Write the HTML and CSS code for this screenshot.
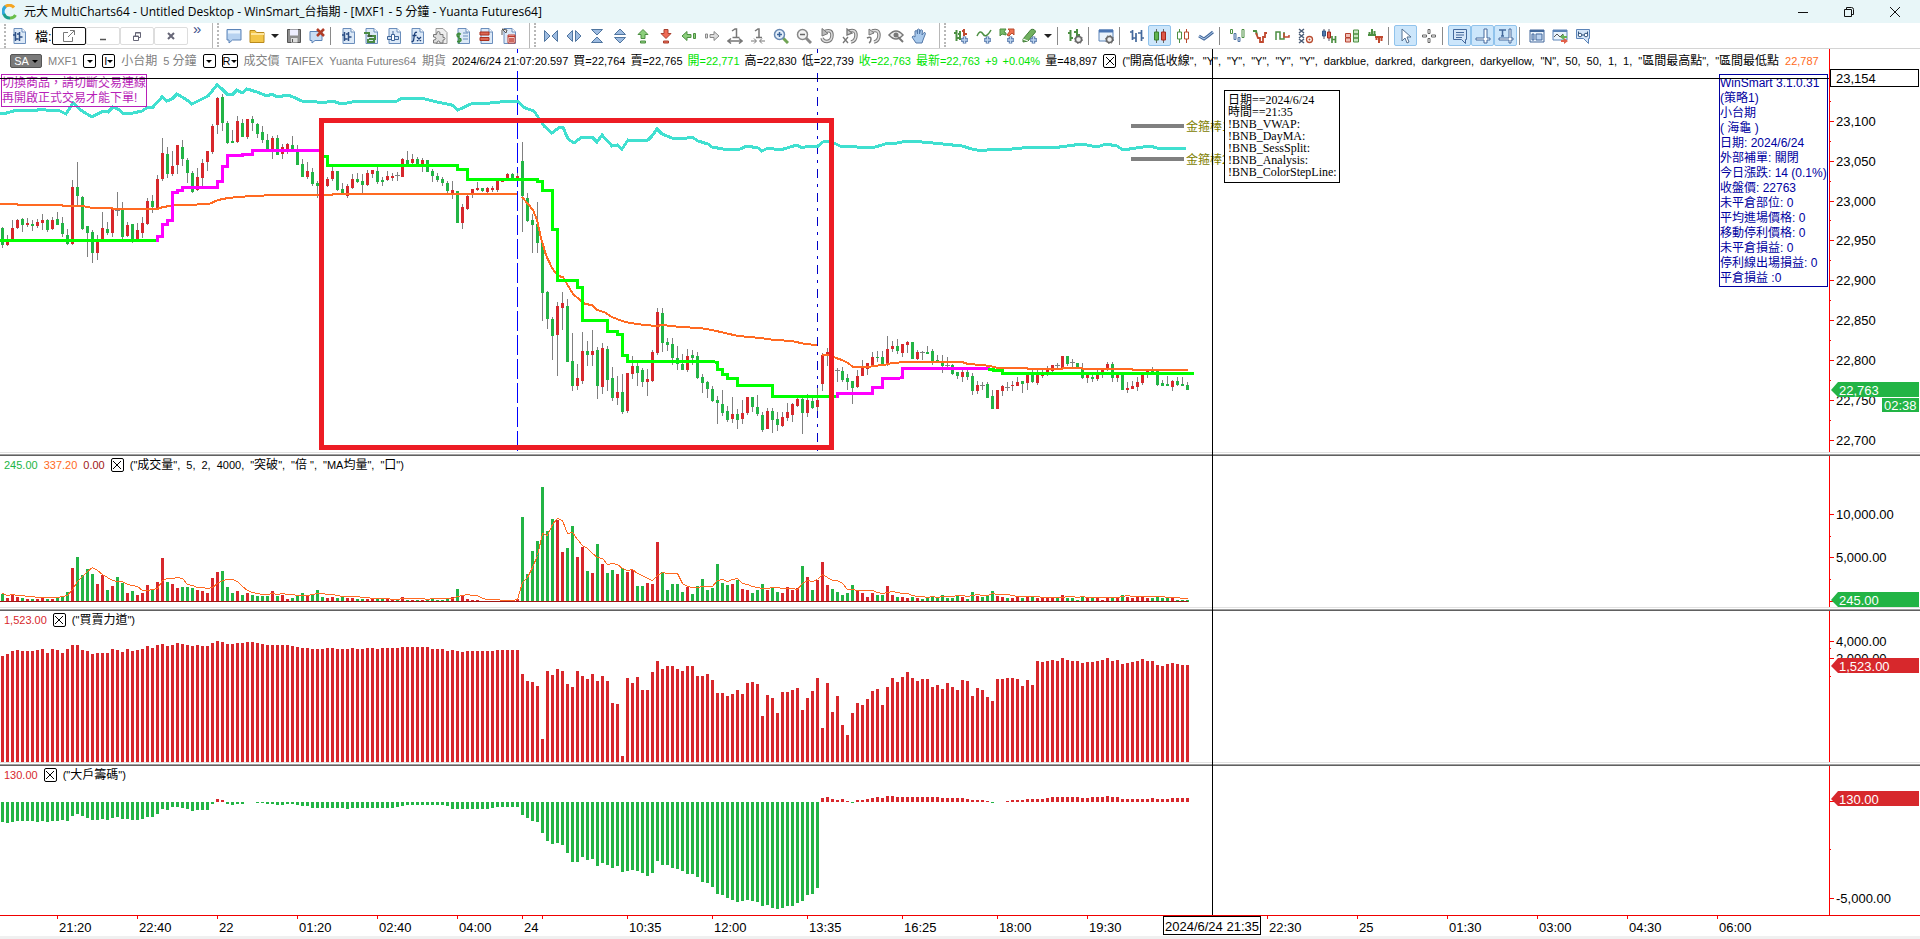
FILE: index.html
```
<!DOCTYPE html>
<html lang="zh-Hant">
<head>
<meta charset="utf-8">
<title>元大 MultiCharts64</title>
<link rel="stylesheet" href="styles.css">
</head>
<body>
<svg class="defs" aria-hidden="true">
  <defs>
    <g id="page"><path d="M3 .5h8l3.500 3.500v11.500h-11.500z" fill="#dce9f7" stroke="#6b8ebc"/><path d="M11 .5v3.500h3.500" fill="#fff" stroke="#6b8ebc"/></g>
    <g id="plus"><path d="M11.500 8.500v7M8 12h7" stroke="#4a6fa5" stroke-width="3.500"/><path d="M11.500 9v6M8.500 12h6" stroke="#bcd3ef" stroke-width="1.500"/></g>
    <g id="cog"><circle cx="11.500" cy="11.500" r="3" fill="#eee" stroke="#666" stroke-width="1.500"/><circle cx="11.500" cy="11.500" r="4" fill="none" stroke="#666" stroke-dasharray="1.500 1.600"/></g>
    <symbol id="i-instr" viewBox="0 0 16 16"><use href="#page"/><path d="M4.500 4v9M2 7h2.500M4.500 11h3M8.500 4v9M6 6h2.500M8.500 9h3" stroke="#2d4f85" stroke-width="1.500"/></symbol>
    <symbol id="i-chart" viewBox="0 0 16 16"><use href="#page"/><path d="M1 5h5v3h6v3h-6M5 11v3h6v-3" fill="none" stroke="#4b8b45" stroke-width="2"/><path d="M4 8h5" stroke="#333"/></symbol>
    <symbol id="i-lock" viewBox="0 0 16 16"><use href="#page"/><path d="M1.500 8.500h11v3h-11z" fill="#cfe0f2" stroke="#3f6599"/><path d="M5.500 6.500h3v6h-3zM7 3v3" fill="#fff" stroke="#3f6599"/></symbol>
    <symbol id="i-fx" viewBox="0 0 16 16"><use href="#page"/><path d="M8 4.500q-2-1-2.500 2l-1 6q-.5 1.500-2 1M3.500 7.500h4M8 9l4 4M12 9l-4 4" fill="none" stroke="#1d3f78" stroke-width="1.300"/></symbol>
    <symbol id="i-puzzle" viewBox="0 0 16 16"><path d="M4 .5h7l4 4v11H4z" fill="#eee" stroke="#999"/><path d="M1.500 6.500h3q0-3 2-3t1.500 3h3v3q2-.5 2 1t-2 1.500v3h-3q0-2-1.500-2t-1.500 2h-3.500v-3q2.500 0 2.500-1.500t-2.500-1.500z" fill="#ddd" stroke="#777"/></symbol>
    <symbol id="i-dollar" viewBox="0 0 16 16"><use href="#page"/><path d="M8 5h5M8 8h5M8 11h5" stroke="#6b8ebc"/><path d="M6 6q-4-1-4 1t2 2.500 2 2.500-4 1.500M4 4.500v11" fill="none" stroke="#3a8a36" stroke-width="1.500"/></symbol>
    <symbol id="i-redbars" viewBox="0 0 16 16"><use href="#page"/><path d="M2 4h9v3H2zM2 9.500h9v3H2z" fill="#dd6753" stroke="#a8301f"/></symbol>
    <symbol id="i-scan" viewBox="0 0 16 16"><use href="#page"/><path d="M7 7h7v8H7z" fill="#fff" stroke="#c0392b"/><path d="M7 8.500h7M8 11h5M8 13h5" stroke="#c0392b" stroke-width="1.500"/><path d="M1 1l5 1-1 3zM1 2v5" fill="#eee" stroke="#555"/></symbol>
    <symbol id="i-chat" viewBox="0 0 16 16"><path d="M1 1.500h14v10.500H6.500L3 15v-3H1z" fill="#b7d2f0" stroke="#5c84b8"/><path d="M2 2.500h12v3H2z" fill="#e7f2fd"/></symbol>
    <symbol id="i-folder" viewBox="0 0 16 16"><path d="M1 2.500h5l1.500 2h7.500v10H1z" fill="#f3c648" stroke="#b98a1d"/><path d="M2 6h13" stroke="#ffe69b" stroke-width="2"/></symbol>
    <symbol id="i-save" viewBox="0 0 16 16"><path d="M1.500 1.500h13v13h-13z" fill="#8e8e8e" stroke="#555"/><path d="M4 1.500h8v6H4z" fill="#eef"/><path d="M5 10h6.500v4.500H5z" fill="#ddd"/><path d="M6.500 11v3" stroke="#555"/></symbol>
    <symbol id="i-chatx" viewBox="0 0 16 16"><path d="M1 3.500h12v9H6L3 15v-2.500H1z" fill="#c9ddf4" stroke="#5c84b8"/><path d="M8 1l7 7M15 1L8 8" stroke="#b03d28" stroke-width="2.500"/></symbol>
    <symbol id="i-hin" viewBox="0 0 16 16"><path d="M1.500 2.500l5.500 5.500-5.500 5.500zM14.500 2.500L9 8l5.500 5.500z" fill="#9dbbe0" stroke="#50759f"/></symbol>
    <symbol id="i-hout" viewBox="0 0 16 16"><path d="M6.500 2.500L1 8l5.500 5.500zM9.500 2.500L15 8l-5.500 5.500z" fill="#9dbbe0" stroke="#50759f"/></symbol>
    <symbol id="i-vin" viewBox="0 0 16 16"><path d="M2.500 1.500h11L8 7zM2.500 14.500h11L8 9z" fill="#9dbbe0" stroke="#50759f"/></symbol>
    <symbol id="i-vout" viewBox="0 0 16 16"><path d="M2.500 6.500h11L8 1zM2.500 9.500h11L8 15z" fill="#9dbbe0" stroke="#50759f"/></symbol>
    <symbol id="i-up" viewBox="0 0 16 16"><path d="M8 1.500l5 5h-3v4h-4v-4h-3zM5.500 13h5v2h-5z" fill="#8ccf7c" stroke="#4c8f42"/></symbol>
    <symbol id="i-down" viewBox="0 0 16 16"><path d="M8 10.500l5-5h-3v-4h-4v4h-3zM5.500 13h5v2h-5z" fill="#ef6a55" stroke="#a8402f"/></symbol>
    <symbol id="i-left" viewBox="0 0 16 16"><path d="M1 8l5-4.500v3h4v3h-4v3zM12.500 5.500h2v5h-2z" fill="#8ccf7c" stroke="#4c8f42"/></symbol>
    <symbol id="i-right" viewBox="0 0 16 16"><path d="M15 8l-5-4.500v3H6v3h4v3zM1.500 6h2v4h-2z" fill="#ddd" stroke="#888"/></symbol>
    <symbol id="i-one" viewBox="0 0 16 16"><path d="M5 3l3-2h1.500v8M5.500 9.500h7" fill="none" stroke="#777" stroke-width="1.500"/><path d="M1 13h14M4 10.500L1 13l3 2.500M12 10.500l3 2.500-3 2.500" fill="none" stroke="#777" stroke-width="1.500"/></symbol>
    <symbol id="i-oneb" viewBox="0 0 16 16"><path d="M5 3l3-2h1v8M6 9.500h6" fill="none" stroke="#777" stroke-width="1.500"/><path d="M1 13h5M15 13h-5M4 10.500L6.500 13 4 15.500M12 10.500L9.500 13l2.500 2.500" fill="none" stroke="#777"/></symbol>
    <symbol id="i-zin" viewBox="0 0 16 16"><path d="M10 10l5 5" stroke="#71a455" stroke-width="3"/><circle cx="6.500" cy="6.500" r="5" fill="#e4effa" stroke="#6889b3" stroke-width="1.500"/><path d="M4 6.500h5M6.500 4v5" stroke="#3d659c" stroke-width="1.500"/></symbol>
    <symbol id="i-zout" viewBox="0 0 16 16"><path d="M10 10l5 5" stroke="#888" stroke-width="3"/><circle cx="6.500" cy="6.500" r="5" fill="#f3f3f3" stroke="#888" stroke-width="1.500"/><path d="M4 6.500h5" stroke="#666" stroke-width="1.500"/></symbol>
    <symbol id="i-undo" viewBox="0 0 16 16"><path d="M6 3.500q7-2.500 7 3.500t-5 6.500q-4 0-5-3.500" fill="none" stroke="#777" stroke-width="3.500"/><path d="M6 3.500q7-2.500 7 3.500t-5 6.500q-4 0-5-3.500" fill="none" stroke="#ddd" stroke-width="1.500"/><path d="M3 .5v7.500l6-2.500z" fill="#bbb" stroke="#777"/></symbol>
    <symbol id="i-undox" viewBox="0 0 16 16"><path d="M7 3q7-2 7 4t-5 7" fill="none" stroke="#777" stroke-width="3.500"/><path d="M7 3q7-2 7 4t-5 7" fill="none" stroke="#ddd" stroke-width="1.500"/><path d="M5 1v6l5-2zM1 9l5 6M6 9l-5 6" fill="#ccc" stroke="#777" stroke-width="1.300"/></symbol>
    <symbol id="i-undoq" viewBox="0 0 16 16"><path d="M7 3q7-2 7 4t-5 7" fill="none" stroke="#777" stroke-width="3.500"/><path d="M7 3q7-2 7 4t-5 7" fill="none" stroke="#ddd" stroke-width="1.500"/><path d="M4 1v6l5-2z" fill="#ccc" stroke="#777"/><path d="M2 10q4-2 4 1t-2 4" fill="none" stroke="#777" stroke-width="1.500"/></symbol>
    <symbol id="i-eye" viewBox="0 0 16 16"><path d="M1 7q7-8 14 0-7 8-14 0z" fill="#eee" stroke="#777" stroke-width="1.500"/><circle cx="8" cy="7" r="2.500" fill="#777"/><path d="M10 9l5 5" stroke="#777" stroke-width="2"/></symbol>
    <symbol id="i-hand" viewBox="0 0 16 16"><path d="M5 15l-4-6q1-2 3 0V3q1.500-1 2 0l.5 3V1.500q1.500-1 2 0V6l1-4q1.500-.5 2 .5L11 7l2-2.500q1.500 0 1.500 1L12 12l-1 3z" fill="#a8c9ec" stroke="#5478a8"/></symbol>
    <symbol id="i-addinstr" viewBox="0 0 16 16"><path d="M3.500 2v11M1 5h2.500M3.500 10H7M7 3v9M5 6h2" stroke="#4c8f42" stroke-width="2"/><path d="M11 1v7M9 3h2M11 6h3" stroke="#c0492f" stroke-width="2"/><use href="#plus"/></symbol>
    <symbol id="i-addcurve" viewBox="0 0 16 16"><path d="M1 8q3-7 6-2t8-4" fill="none" stroke="#4c8f42" stroke-width="1.500"/><use href="#plus"/></symbol>
    <symbol id="i-addsignal" viewBox="0 0 16 16"><path d="M1 1v7l2-2 4 1V5L5 4l2-3z" fill="#78b969" stroke="#4c8f42"/><path d="M15 1H9l2 2-3 4 2 1 3-3 2 2z" fill="#ee7351" stroke="#b84a2e"/><use href="#plus"/></symbol>
    <symbol id="i-adddraw" viewBox="0 0 16 16"><path d="M1 11L9 1.500q4-1 4.500 2.500L6 13l-5 1z" fill="#71b060" stroke="#447f3b"/><path d="M1 11l5 2" stroke="#fff"/><use href="#plus"/></symbol>
    <symbol id="i-fmt" viewBox="0 0 16 16"><path d="M3.500 2v11M1 5h2.500M3.500 10H6M10 1v9M7 4h3M10 7h3" stroke="#4c8f42" stroke-width="2"/><use href="#cog"/></symbol>
    <symbol id="i-win" viewBox="0 0 16 16"><path d="M1 2h14v11H1z" fill="#eaf3fc" stroke="#5c84b8"/><path d="M1 3h14" stroke="#4b76b4" stroke-width="3"/><use href="#cog"/></symbol>
    <symbol id="i-ohlc" viewBox="0 0 16 16"><path d="M3.500 2v10M1 4h2.500M3.500 10H7v4M7 5v9M12.500 2v11M9 5h3.500M12.500 10H15" fill="none" stroke="#44699c" stroke-width="1.700"/></symbol>
    <symbol id="i-candle" viewBox="0 0 16 16"><path d="M4.500 1v14M11.500 1v14" stroke="#666"/><path d="M2.500 4h4v8h-4z" fill="#61b451" stroke="#397e2e"/><path d="M9.500 4h4v8h-4z" fill="#dc5748" stroke="#a5281c"/></symbol>
    <symbol id="i-hollow" viewBox="0 0 16 16"><path d="M4.500 1v14" stroke="#4c8f42"/><path d="M11.500 1v14" stroke="#b84a2e"/><path d="M2.500 4h4v7h-4z" fill="#fff" stroke="#4c8f42"/><path d="M9.500 4h4v7h-4z" fill="#fff" stroke="#b84a2e"/></symbol>
    <symbol id="i-line" viewBox="0 0 16 16"><path d="M1 8l5 3 4-3 5-4" fill="none" stroke="#44699c" stroke-width="3"/><path d="M1 8l5 3 4-3 5-4" fill="none" stroke="#b4cdea"/></symbol>
    <symbol id="i-blocks" viewBox="0 0 16 16"><path d="M1.500 1.500h2v4h-2zM13 1.500h2v8h-2z" fill="#fff" stroke="#4c8f42"/><path d="M5 5.500h2v6H5zM9 9.500h2v4H9z" fill="#c8daf0" stroke="#5577a6"/></symbol>
    <symbol id="i-kagi" viewBox="0 0 16 16"><path d="M1 3h3l1 4" fill="none" stroke="#4c8f42" stroke-width="2"/><path d="M4 5l2 5h2v4h3V9h2V5h2" fill="none" stroke="#c0492f" stroke-width="1.800"/></symbol>
    <symbol id="i-step" viewBox="0 0 16 16"><path d="M1 12V4h4v7h4V4" fill="none" stroke="#4c8f42" stroke-width="1.500"/><path d="M9 5v4h5v-2" fill="none" stroke="#c0492f" stroke-width="1.500"/></symbol>
    <symbol id="i-pf" viewBox="0 0 16 16"><path d="M1 1l5 4M6 1L1 5M1 6l5 4M6 6l-5 4M1 11l5 4M6 11l-5 4" stroke="#4b5d77" stroke-width="1.500"/><circle cx="11.500" cy="11.500" r="3" fill="#fff" stroke="#b84a2e" stroke-width="1.300"/><circle cx="11.500" cy="11.500" r="1" fill="#b84a2e"/></symbol>
    <symbol id="i-hash" viewBox="0 0 16 16"><path d="M3 1v10M8 1v12" stroke="#556"/><path d="M1.500 3h3v5h-3z" fill="#5279ad" stroke="#355a8a"/><path d="M6.500 4h3v6h-3z" fill="#e46955" stroke="#a5281c"/><path d="M11 8v7M14.500 8v7M11 11.500h3.500" stroke="#4c8f42" stroke-width="1.700"/></symbol>
    <symbol id="i-grid" viewBox="0 0 16 16"><path d="M1.500 5.500h5v4h-5zM1.500 10h5v4h-5z" fill="#f0bdb4" stroke="#b5412e"/><path d="M9.500 2h5v4h-5zM9.500 6h5v4h-5zM9.500 10h5v4h-5z" fill="#c9e5c2" stroke="#4c8f42"/></symbol>
    <symbol id="i-profile" viewBox="0 0 16 16"><path d="M1 7h8M2.500 7V4M5 7V1M7.500 7V3" stroke="#4c8f42" stroke-width="2"/><path d="M8 9h8M9.500 9v3M12 9v6M14.500 9v4" stroke="#c0492f" stroke-width="2"/></symbol>
    <symbol id="i-cursor" viewBox="0 0 16 16"><path d="M4 1v12l3-3 2 5 2-1-2-5h4z" fill="#fff" stroke="#55708f"/></symbol>
    <symbol id="i-cross" viewBox="0 0 16 16"><path d="M7 1.500h2v4H7zM7 10.500h2v4H7zM1.500 7h4v2h-4zM10.500 7h4v2h-4z" fill="#fff" stroke="#666"/></symbol>
    <symbol id="i-note" viewBox="0 0 16 16"><path d="M1.500 1.500h13v10h-1v4l-4-4h-8z" fill="#d5e6f8" stroke="#44699c"/><path d="M4 4.500h8M4 7h8M4 9.500h6" stroke="#44699c"/></symbol>
    <symbol id="i-axis" viewBox="0 0 16 16"><path d="M9 1h3v9h3v2h-3v3H9v-3H1v-2h8z" fill="#fff" stroke="#44699c"/></symbol>
    <symbol id="i-axist" viewBox="0 0 16 16"><path d="M11 1h2v9h2v2h-2v3h-2v-3H1v-2h10z" fill="#fff" stroke="#44699c"/><path d="M1 2h7M4.500 2v6M3 8h3" stroke="#44699c" stroke-width="1.500"/></symbol>
    <symbol id="i-panel" viewBox="0 0 16 16"><path d="M1 2h14v12H1z" fill="#eaf3fc" stroke="#44699c"/><path d="M1 3h14" stroke="#44699c" stroke-width="2"/><path d="M3 6h2v6H3zM7 6h6v6H7z" fill="#bcd3ef" stroke="#44699c"/></symbol>
    <symbol id="i-export" viewBox="0 0 16 16"><path d="M1 2h14v10H1z" fill="#eaf3fc" stroke="#5c84b8"/><path d="M1 3h14" stroke="#5c84b8" stroke-width="2"/><path d="M2 9l3-3 3 3 3-3" fill="none" stroke="#555"/><path d="M15 8h-3V6L8 9l4 3v-2h3z" fill="#67b356"/><path d="M9 12h3v-2l4 3-4 3v-2H9z" fill="#e0604a"/></symbol>
    <symbol id="i-find" viewBox="0 0 16 16"><path d="M1.500 1.500h13v9h-1v5l-5-5h-7z" fill="#d5e6f8" stroke="#5c84b8"/><circle cx="5" cy="7" r="1.800" fill="#fff" stroke="#34567f"/><circle cx="11" cy="7" r="1.800" fill="#fff" stroke="#34567f"/><path d="M3.500 6V3.500M12.500 6V3.500M7 7h2" stroke="#34567f"/></symbol>
  </defs>
</svg>

<div class="app">
  <header class="titlebar">
    <svg class="logo" viewBox="0 0 16 16" aria-hidden="true"><path d="M12 3.500a6 6 0 0 0-9-.5" fill="none" stroke="#f5a623" stroke-width="3"/><path d="M3.500 2.500a6.500 6.500 0 0 0-1.500 8" fill="none" stroke="#2fa8dc" stroke-width="3"/><path d="M2 10a6 6 0 0 0 6 4" fill="none" stroke="#1b9e8a" stroke-width="3"/><path d="M8 14a6 6 0 0 0 5.500-3" fill="none" stroke="#6abf4b" stroke-width="3"/></svg>
    <h1 class="title">元大 MultiCharts64 - Untitled Desktop - WinSmart_台指期 - [MXF1 - 5 分鐘 - Yuanta Futures64]</h1>
    <div class="winbtns">
      <button aria-label="最小化"><svg viewBox="0 0 10 10"><path d="M0 5.500h10" stroke="#111"/></svg></button>
      <button aria-label="還原"><svg viewBox="0 0 10 10"><path d="M.5 2.500h7v7h-7zM2.500 2V.5h5q2 0 2 2v5H8" fill="none" stroke="#111"/></svg></button>
      <button aria-label="關閉"><svg viewBox="0 0 10 10"><path d="M0 0l10 10M10 0L0 10" stroke="#111"/></svg></button>
    </div>
  </header>

  <nav class="toolbar">
    <span class="grip"></span>
    <button class="tb" aria-label="商品"><svg><use href="#i-instr"/></svg></button>
    <button class="menu">檔:</button>
    <div class="mdi">
      <button class="on" aria-label="彈出"><svg viewBox="0 0 12 12"><path d="M5 2.500H.5v9h9V7M7 .5h4.500V5M11 1L5 7" fill="none" stroke="#777"/></svg></button>
      <button aria-label="縮小"><svg viewBox="0 0 12 12"><path d="M3 9.500h6" stroke="#555" stroke-width="1.500"/></svg></button>
      <button aria-label="還原視窗"><svg viewBox="0 0 12 12"><path d="M2.500 6h5v4.500h-5zM2.500 6.500h5M4.500 6V2.500h5v5H8M4.500 3h5" fill="none" stroke="#667"/></svg></button>
      <button aria-label="關閉視窗"><svg viewBox="0 0 12 12"><path d="M3 3l6 6M9 3L3 9" stroke="#667" stroke-width="2"/></svg></button>
    </div>
    <button class="more" aria-label="更多">»</button>
    <span class="split"></span>
    <button class="tb" aria-label="新增"><svg><use href="#i-chat"/></svg></button>
    <button class="tb" aria-label="開啟"><svg><use href="#i-folder"/></svg></button>
    <button class="drop" aria-label="開啟選單"></button>
    <button class="tb" aria-label="儲存"><svg><use href="#i-save"/></svg></button>
    <button class="tb" aria-label="刪除"><svg><use href="#i-chatx"/></svg></button>
    <span class="sep"></span>
    <button class="tb" aria-label="插入商品"><svg><use href="#i-instr"/></svg></button>
    <button class="tb" aria-label="插入圖表"><svg><use href="#i-chart"/></svg></button>
    <button class="tb" aria-label="鎖定"><svg><use href="#i-lock"/></svg></button>
    <button class="tb" aria-label="函數"><svg><use href="#i-fx"/></svg></button>
    <button class="tb" aria-label="外掛"><svg><use href="#i-puzzle"/></svg></button>
    <button class="tb" aria-label="策略"><svg><use href="#i-dollar"/></svg></button>
    <button class="tb" aria-label="深度"><svg><use href="#i-redbars"/></svg></button>
    <button class="tb" aria-label="掃描"><svg><use href="#i-scan"/></svg></button>
    <span class="split"></span>
    <button class="tb" aria-label="縮小間距"><svg><use href="#i-hin"/></svg></button>
    <button class="tb" aria-label="放大間距"><svg><use href="#i-hout"/></svg></button>
    <button class="tb" aria-label="垂直縮小"><svg><use href="#i-vin"/></svg></button>
    <button class="tb" aria-label="垂直放大"><svg><use href="#i-vout"/></svg></button>
    <button class="tb" aria-label="上"><svg><use href="#i-up"/></svg></button>
    <button class="tb" aria-label="下"><svg><use href="#i-down"/></svg></button>
    <button class="tb" aria-label="左"><svg><use href="#i-left"/></svg></button>
    <button class="tb" aria-label="右"><svg><use href="#i-right"/></svg></button>
    <button class="tb" aria-label="一比一"><svg><use href="#i-one"/></svg></button>
    <button class="tb" aria-label="重設"><svg><use href="#i-oneb"/></svg></button>
    <button class="tb" aria-label="放大"><svg><use href="#i-zin"/></svg></button>
    <button class="tb" aria-label="縮小圖"><svg><use href="#i-zout"/></svg></button>
    <button class="tb" aria-label="復原"><svg><use href="#i-undo"/></svg></button>
    <button class="tb" aria-label="全部復原"><svg><use href="#i-undox"/></svg></button>
    <button class="tb" aria-label="復原縮放"><svg><use href="#i-undoq"/></svg></button>
    <button class="tb" aria-label="檢視"><svg><use href="#i-eye"/></svg></button>
    <button class="tb" aria-label="拖曳"><svg><use href="#i-hand"/></svg></button>
    <span class="split"></span>
    <button class="tb" aria-label="加入商品"><svg><use href="#i-addinstr"/></svg></button>
    <button class="tb" aria-label="加入指標"><svg><use href="#i-addcurve"/></svg></button>
    <button class="tb" aria-label="加入訊號"><svg><use href="#i-addsignal"/></svg></button>
    <button class="tb" aria-label="繪圖"><svg><use href="#i-adddraw"/></svg></button>
    <button class="drop" aria-label="繪圖選單"></button>
    <span class="sep"></span>
    <button class="tb" aria-label="格式"><svg><use href="#i-fmt"/></svg></button>
    <span class="sep"></span>
    <button class="tb" aria-label="視窗設定"><svg><use href="#i-win"/></svg></button>
    <span class="sep"></span>
    <button class="tb" aria-label="OHLC"><svg><use href="#i-ohlc"/></svg></button>
    <button class="tb on" aria-label="K線"><svg><use href="#i-candle"/></svg></button>
    <button class="tb" aria-label="空心K線"><svg><use href="#i-hollow"/></svg></button>
    <button class="tb" aria-label="線圖"><svg><use href="#i-line"/></svg></button>
    <span class="sep"></span>
    <button class="tb" aria-label="磚形圖"><svg><use href="#i-blocks"/></svg></button>
    <button class="tb" aria-label="卡吉圖"><svg><use href="#i-kagi"/></svg></button>
    <button class="tb" aria-label="階梯圖"><svg><use href="#i-step"/></svg></button>
    <button class="tb" aria-label="點數圖"><svg><use href="#i-pf"/></svg></button>
    <button class="tb" aria-label="平均K線"><svg><use href="#i-hash"/></svg></button>
    <button class="tb" aria-label="磚塊"><svg><use href="#i-grid"/></svg></button>
    <button class="tb" aria-label="量價"><svg><use href="#i-profile"/></svg></button>
    <span class="sep"></span>
    <button class="tb on" aria-label="指標"><svg><use href="#i-cursor"/></svg></button>
    <button class="tb" aria-label="十字線"><svg><use href="#i-cross"/></svg></button>
    <span class="sep"></span>
    <button class="tb on" aria-label="註解"><svg><use href="#i-note"/></svg></button>
    <button class="tb on" aria-label="座標"><svg><use href="#i-axis"/></svg></button>
    <button class="tb on" aria-label="時間座標"><svg><use href="#i-axist"/></svg></button>
    <span class="sep"></span>
    <button class="tb" aria-label="資料視窗"><svg><use href="#i-panel"/></svg></button>
    <button class="tb" aria-label="匯出"><svg><use href="#i-export"/></svg></button>
    <button class="tb" aria-label="搜尋"><svg><use href="#i-find"/></svg></button>
  </nav>

  <main class="chart">
    <section class="pane">
      <div class="plot">
        <svg id="price" width="1829" height="403" viewBox="0 49 1829 403"></svg>
        <div class="legend">
          <div class="group">
            <button class="chip sa">SA<i class="tri"></i></button>
            <span class="dim">MXF1</span>
            <button class="chip" aria-label="商品選單"><i class="tri"></i></button>
            <button class="chip">I<i class="tri"></i></button>
            <span class="dim zh">小台期</span><span class="dim">5 <span class="zh">分鐘</span></span>
            <button class="chip" aria-label="週期選單"><i class="tri"></i></button>
            <button class="chip">R<i class="tri"></i></button>
            <span class="dim zh">成交價</span><span class="dim">TAIFEX</span><span class="dim">Yuanta Futures64</span><span class="dim zh">期貨</span>
          </div>
          <div class="group quotes">
            <span>2024/6/24 21:07:20.597</span>
            <span><span class="zh">買</span>=22,764</span>
            <span><span class="zh">賣</span>=22,765</span>
            <span class="lime"><span class="zh">開</span>=22,771</span>
            <span><span class="zh">高</span>=22,830</span>
            <span><span class="zh">低</span>=22,739</span>
            <span class="lime"><span class="zh">收</span>=22,763</span>
            <span class="lime"><span class="zh">最新</span>=22,763</span>
            <span class="lime">+9</span><span class="lime">+0.04%</span>
            <span><span class="zh">量</span>=48,897</span>
          </div>
          <div class="group">
            <button class="chip box" aria-label="移除指標"><i class="ex"></i></button>
            <span>("<span class="zh">開高低收線</span>",</span>
            <span>"Y",</span><span>"Y",</span><span>"Y",</span><span>"Y",</span><span>"Y",</span>
            <span>darkblue,</span><span>darkred,</span><span>darkgreen,</span><span>darkyellow,</span>
            <span>"N",</span><span>50,</span><span>50,</span><span>1,</span><span>1,</span>
            <span>"<span class="zh">區間最高點</span>",</span><span>"<span class="zh">區間最低點</span></span>
            <span class="orange">22,787</span>
          </div>
        </div>
        <p class="note warn">切換商品，請切斷交易連線<br>再開啟正式交易才能下單!</p>
        <p class="note hint">日期==2024/6/24<br>時間==21:35<br>!BNB_VWAP:<br>!BNB_DayMA:<br>!BNB_SessSplit:<br>!BNB_Analysis:<br>!BNB_ColorStepLine:</p>
        <p class="note smart">WinSmart 3.1.0.31<br>(策略1)<br>小台期<br>( 海龜 )<br>日期: 2024/6/24<br>外部補單: 關閉<br>今日漲跌: 14 (0.1%)<br>收盤價: 22763<br>未平倉部位: 0<br>平均進場價格: 0<br>移動停利價格: 0<br>未平倉損益: 0<br>停利線出場損益: 0<br>平倉損益 :0</p>
        <div class="hair"></div>
      </div>
      <svg class="axis" id="axis-price" width="91" height="403" viewBox="1829 49 91 403"></svg>
    </section>
    <div class="divider"></div>
    <section class="pane">
      <div class="plot">
        <svg id="volume" width="1829" height="151" viewBox="0 456 1829 151"></svg>
        <div class="legend sub">
          <span class="green">245.00</span><span class="orange">337.20</span><span class="darkred">0.00</span>
          <button class="chip box" aria-label="移除成交量"><i class="ex"></i></button>
          <span>("<span class="zh">成交量</span>",</span><span>5,</span><span>2,</span><span>4000,</span><span>"<span class="zh">突破</span>",</span><span>"<span class="zh">倍</span> ",</span><span>"MA<span class="zh">均量</span>",</span><span>"<span class="zh">口</span>")</span>
        </div>
      </div>
      <svg class="axis" id="axis-volume" width="91" height="151" viewBox="1829 456 91 151"></svg>
    </section>
    <div class="divider"></div>
    <section class="pane">
      <div class="plot">
        <svg id="force" width="1829" height="151" viewBox="0 611 1829 151"></svg>
        <div class="legend sub">
          <span class="red">1,523.00</span>
          <button class="chip box" aria-label="移除買賣力道"><i class="ex"></i></button>
          <span>("<span class="zh">買賣力道</span>")</span>
        </div>
      </div>
      <svg class="axis" id="axis-force" width="91" height="151" viewBox="1829 611 91 151"></svg>
    </section>
    <div class="divider"></div>
    <section class="pane">
      <div class="plot">
        <svg id="chips" width="1829" height="149" viewBox="0 766 1829 149"></svg>
        <div class="legend sub">
          <span class="red">130.00</span>
          <button class="chip box" aria-label="移除大戶籌碼"><i class="ex"></i></button>
          <span>("<span class="zh">大戶籌碼</span>")</span>
        </div>
      </div>
      <svg class="axis" id="axis-chips" width="91" height="149" viewBox="1829 766 91 149"></svg>
    </section>
    <div class="times"><svg id="times" width="1829" height="21" viewBox="0 915 1829 21"></svg></div>
    <div class="crosshair"></div>
  </main>
  <footer class="foot"></footer>
</div>
<script src="chart.js"></script>
</body>
</html>
```
FILE: styles.css
```
* { box-sizing: border-box; }
body { margin: 0; background: #fff; color: #000; font-family: "Liberation Sans", "Noto Sans CJK TC", sans-serif; font-size: 11px; }
button { margin: 0; padding: 0; border: 0; background: none; font: inherit; color: inherit; }
.defs { position: absolute; width: 0; height: 0; }
.app { display: flex; flex-direction: column; min-height: 100vh; overflow: hidden; }

.titlebar { display: flex; align-items: center; height: 23px; padding: 0 2px 0 2px; background: #e8f6f8; }
.logo { width: 16px; height: 16px; margin-right: 6px; }
.title { flex: 1; margin: 0; font: 400 12px/23px "Open Sans", "Noto Sans CJK TC", sans-serif; white-space: nowrap; }
.winbtns { display: flex; }
.winbtns button { width: 46px; height: 22px; display: flex; align-items: center; justify-content: center; }
.winbtns svg { width: 10px; height: 10px; }

.toolbar { display: flex; align-items: center; height: 26px; padding-left: 4px; border-bottom: 1px solid #d4d4d4; white-space: nowrap; }
.grip { width: 3px; height: 24px; border-left: 2px dotted #b8b8b8; }
.tb { flex: none; width: 23px; height: 21px; display: flex; align-items: center; justify-content: center; border: 1px solid transparent; }
.tb svg { width: 16px; height: 16px; }
.tb.on { background: #cce6fb; border-color: #90c3ec; border-radius: 2px; }
.menu { width: 17px; height: 21px; margin-left: 5px; font-size: 13px; text-align: left; }
.mdi { display: flex; }
.mdi button { width: 34px; height: 18px; display: flex; align-items: center; justify-content: center; border: 1px solid #ddd; border-radius: 2px; }
.mdi svg { width: 12px; height: 12px; }
.mdi .on { border: 1px solid #111; }
.more { width: 15px; height: 24px; padding-left: 5px; color: #3d4f8a; font-size: 15px; line-height: 10px; display: flex; }
.split { flex: none; width: 19px; height: 25px; border-left: 1px solid #b8b8b8; margin: 0 -9px 0 9px; }
.split::after { content: ""; display: block; width: 3px; height: 24px; margin-left: 4px; border-left: 2px dotted #b8b8b8; }
.sep { flex: none; width: 8px; height: 18px; border-left: 1px solid #8a8a8a; margin: 0 -2px 0 2px; }
.drop { flex: none; width: 14px; height: 20px; }
.drop::after { content: ""; display: block; margin: 0 auto; width: 0; border: 4px solid transparent; border-bottom: 0; border-top-color: #222; }

.chart { position: relative; flex: 1; display: grid; grid-template-rows: 403fr 4px 151fr 4px 151fr 4px 149fr 21px; }
.pane { display: flex; min-height: 0; overflow: hidden; }
.plot { position: relative; flex: 1; min-width: 0; overflow: hidden; }
.plot svg, .axis, .times svg { display: block; }
.axis { flex: none; }
.divider { border-top: 1px solid #e2e2e2; }
.divider::after { content: ""; display: block; margin-top: 1px; height: 1px; background: #a0a0a0; border-bottom: 1px solid #606060; }
.times { border-top: 1px solid #f00000; overflow: hidden; }
.times svg { margin-top: -1px; }
.foot { height: 3px; background: #f0f0f0; }
.crosshair { position: absolute; left: 1212px; top: 0; bottom: 21px; width: 1px; background: #000; }
.hair { position: absolute; left: 0; right: 0; top: 29px; height: 1px; background: #000; }

.legend { position: absolute; left: 10px; top: 4px; height: 16px; display: flex; align-items: center; gap: 6px; line-height: 16px; white-space: nowrap; background: #fff; }
.legend.sub { left: 4px; top: 1px; }
.group { display: flex; align-items: center; gap: 6px; }
.quotes { gap: 5px; }
.zh { font-size: 12px; }
.dim { color: #808080; }
.lime { color: #00e400; }
.green { color: #22b445; }
.orange { color: #ff6a22; }
.red { color: #d7282c; }
.darkred { color: #a01818; }
.chip { height: 14px; min-width: 13px; display: flex; align-items: center; justify-content: center; border: 1px solid #000; border-radius: 2px; background: #fff; font-size: 11px; line-height: 12px; }
.chip.sa { background: #7a7a7a; color: #fff; width: 32px; gap: 3px; border-color: #555; }
.tri { border: 3px solid transparent; border-bottom: 0; border-top-color: #000; }
.ex { width: 8px; height: 8px; background: linear-gradient(45deg, transparent 44%, #000 44% 56%, transparent 56%), linear-gradient(-45deg, transparent 44%, #000 44% 56%, transparent 56%); }

.note { position: absolute; margin: 0; padding-top: 1px; border: 1px solid; font-size: 12px; line-height: 15px; white-space: nowrap; }
.warn { left: 1px; top: 25px; width: 146px; color: #b81fb8; }
.hint { left: 1224px; top: 41px; padding: 3px 2px 4px 3px; background: #fff; line-height: 12px; font-family: "Liberation Serif", "Noto Sans CJK TC", serif; }
.smart { right: 1px; top: 25px; width: 109px; color: #0000a0; }

.lbl { font: 13px "Liberation Sans", sans-serif; fill: #000; }
.lbl.inv { fill: #fff; }
.gold { font: 12px "Noto Sans CJK TC", sans-serif; fill: #808000; }
```
FILE: chart.js
```
const NS = 'http://www.w3.org/2000/svg';
const RED = '#d7282c', GREEN = '#22b445', ORANGE = '#ff6a22', LIME = '#00ff00', PINK = '#ff00ff', TEAL = '#40e0d0';
const STEP = 5;
const cx = i => 2 + STEP * i;

function add(id, tag, attrs, text) {
  const el = document.createElementNS(NS, tag);
  for (const k in attrs) el.setAttribute(k, attrs[k]);
  if (text) el.textContent = text;
  document.getElementById(id).appendChild(el);
}
const rect = (id, x, y, width, height, fill) => add(id, 'rect', { x, y, width, height, fill });
const line = (id, points, stroke, w, extra) =>
  add(id, 'polyline', Object.assign({ points, stroke, fill: 'none', 'stroke-width': w, 'shape-rendering': 'crispEdges' }, extra));

// high, body top, body bottom, low, colour (r/g, d = unchanged)
const candles = `227 228 245 248 g,235 241 245 246 r,220 228 239 240 r,219 220 228 229 r,218 219 225 232 g,218 223 225 227 r,220 224 226 231 g,219 222 226 228 r,214 220 223 230 r,219 220 230 232 g,217 220 229 230 r,212 219 225 225 g,217 223 234 237 g,229 235 244 245 g,180 187 244 245 r,162 187 196 207 g,196 197 229 230 g,226 226 233 257 g,230 232 253 263 g,235 241 253 260 r,212 228 240 241 r,222 229 233 235 g,207 209 233 237 r,192 210 211 216 d,202 210 237 239 g,222 225 236 237 r,224 224 239 243 g,223 230 240 241 r,217 223 233 238 r,198 201 224 225 r,195 201 207 213 g,175 179 209 210 r,138 153 179 181 r,147 154 174 178 g,151 166 174 176 r,145 145 165 174 r,140 147 159 166 g,158 160 173 183 g,171 173 192 193 g,168 177 190 191 r,159 163 178 186 r,151 151 162 171 r,124 126 152 154 r,97 98 125 134 r,94 97 123 131 g,121 123 143 144 g,130 141 143 143 g,116 121 142 143 r,119 123 137 137 g,119 119 137 139 r,116 119 123 131 g,123 124 134 138 g,126 132 140 143 g,134 140 150 151 g,136 138 151 159 r,135 138 155 155 g,144 147 154 159 r,143 144 150 154 r,136 145 150 151 g,145 150 165 165 g,159 164 177 177 g,162 171 177 179 r,168 172 184 186 g,181 183 186 198 g,180 184 187 190 g,177 179 186 187 r,167 171 179 181 r,171 171 190 191 g,183 189 194 195 g,184 186 196 198 r,174 179 188 189 r,173 179 182 183 g,174 181 185 193 g,170 173 185 186 r,170 170 174 178 r,167 171 182 184 g,177 180 182 186 g,171 176 180 181 r,173 176 178 181 r,172 175 176 181 d,158 159 177 177 r,151 160 165 165 g,154 159 163 165 r,157 159 165 166 g,158 160 165 172 r,160 160 172 172 g,169 171 176 182 g,173 176 180 182 g,177 179 183 186 g,181 183 191 194 g,181 190 194 199 r,191 191 223 223 g,204 207 223 229 r,194 196 209 210 r,189 189 194 198 r,182 188 190 191 r,188 188 191 192 g,187 188 192 193 r,186 188 190 192 r,180 181 190 192 r,178 180 182 182 r,173 174 179 179 r,173 174 179 181 g,173 176 179 179 r,142 161 196 232 g,193 198 221 222 g,214 220 225 253 g,202 224 243 253 g,240 243 293 321 g,291 292 319 329 g,317 319 336 360 g,302 306 335 376 r,292 303 308 330 r,299 306 362 362 g,333 361 386 391 g,364 378 386 390 r,332 351 381 384 r,341 351 355 366 g,330 351 355 366 r,347 350 386 399 g,343 348 387 394 r,346 349 380 391 g,367 378 398 401 g,376 392 398 405 r,374 392 412 414 g,373 373 411 413 r,356 366 374 379 r,361 366 373 386 g,368 370 382 387 g,369 379 382 396 r,350 352 381 382 r,308 312 353 355 r,308 313 343 352 g,338 342 345 351 g,338 344 358 365 g,346 358 364 370 g,354 364 370 370 g,349 356 370 372 r,350 355 358 365 g,352 356 378 379 g,374 377 383 393 g,381 382 389 398 g,386 389 401 402 g,396 400 403 424 g,390 404 413 416 g,406 411 420 422 g,397 414 419 423 r,409 414 420 429 g,400 413 419 424 r,397 397 413 415 r,397 397 407 412 g,395 407 414 416 g,412 415 430 432 g,408 411 429 429 r,408 411 420 433 g,412 419 425 431 g,412 417 426 427 r,403 412 418 421 r,403 404 415 422 r,396 399 406 407 r,396 399 413 434 g,394 400 413 417 r,398 401 408 409 g,388 400 407 411 r,353 355 384 391 r,348 352 355 366 r,354 360 368 372 g,368 370 371 382 d,367 371 380 382 g,374 378 382 390 g,381 381 388 404 g,370 376 387 388 r,360 368 376 376 r,363 363 369 375 r,352 357 365 366 r,351 357 358 362 g,351 357 365 366 g,336 349 364 366 r,341 346 349 352 r,339 346 351 354 g,344 344 353 357 r,341 342 345 353 r,342 342 359 359 g,350 352 359 360 r,351 352 353 360 d,346 352 354 354 g,349 351 361 365 g,355 360 362 363 g,355 362 366 373 g,357 365 366 368 d,364 365 374 375 g,372 372 376 379 g,369 372 377 382 r,369 372 377 380 g,373 376 391 395 g,381 385 391 394 r,382 385 386 390 d,382 384 398 398 g,390 396 409 409 g,390 390 409 409 r,385 386 391 396 r,382 387 388 391 d,381 385 386 391 r,377 382 386 386 r,381 381 384 393 g,374 375 383 390 r,370 374 382 383 g,370 375 383 385 r,370 374 376 378 r,366 370 374 376 r,365 365 371 372 r,363 365 366 369 d,356 356 368 369 r,356 356 364 366 g,359 362 363 368 d,363 363 368 369 g,363 368 378 379 g,372 375 378 383 r,373 377 379 382 g,370 375 379 381 r,369 369 374 378 r,362 364 370 371 r,362 364 378 382 g,374 375 378 382 r,374 374 390 390 g,382 388 390 393 r,381 386 389 389 r,377 382 387 391 r,374 374 383 385 r,369 370 374 378 r,367 370 372 372 g,370 371 385 386 g,380 383 386 386 g,376 384 386 386 g,380 381 387 391 r,377 381 385 386 g,377 384 386 386 g,382 385 390 390 g`
  .split(',').map(s => s.split(' '));

// Session separators
line('price', '517.5,47 517.5,452', '#0000ff', 1, { 'stroke-dasharray': '20 4' });
line('price', '817.5,49 817.5,452', '#0000c8', 1, { 'stroke-dasharray': '9 6 3 6' });

candles.forEach(([h, t, b, l, c], i) => {
  const x = cx(i);
  rect('price', x, +h, 1, l - h, '#808080');
  if (c === 'd') rect('price', x - 2, +t, 5, 1, '#808080');
  else rect('price', x - 1, +t, 3, Math.max(1, b - t), c === 'r' ? RED : GREEN);
});

line('price', '0,113 3,114 17,110 33,111 42,109 50,111 58,110 66,114 73,103 82,111 92,117 103,111 108,112 113,107 118,109 123,113 133,113 142,111 148,107 153,107 162,97 167,101 172,99 177,94 187,100 192,104 202,99 208,96 217,85 222,89 227,94 233,94 237,90 242,93 247,89 257,92 267,96 272,94 277,97 288,95 293,97 302,101 312,101 322,103 332,101 342,104 357,101 375,102 385,101 397,101 402,98 425,99 437,102 452,105 458,110 473,103 490,103 510,101 517,101 525,108 534,111 538,117 544,126 552,133 560,127 563,127 568,139 574,143 582,137 592,137 597,142 602,135 612,146 617,145 622,149 628,140 640,141 648,140 652,136 657,129 662,134 672,138 682,139 692,137 698,141 708,144 712,147 728,150 740,149 747,146 758,148 762,151 768,148 780,150 797,145 802,148 808,146 818,146 823,142 830,141 840,146 857,147 872,148 885,144 897,143 907,141 922,142 943,144 962,146 972,149 982,151 992,149 1012,149 1032,147 1052,148 1067,146 1082,144 1092,146 1100,146 1106,144 1117,146 1123,150 1136,148 1150,146 1157,148 1186,149', TEAL, 3);

line('price', '0,204 17,204 18,205 62,205 63,206 83,206 92,208 112,208 113,209 157,209 163,207 177,205 192,205 202,204 209,204 218,200 228,198 238,197 252,196 277,195 332,195 333,194 517,194', ORANGE, 2);
line('price', '522,197 528,204 533,210 537,220 541,238 546,255 552,268 558,276 563,277 567,284 573,294 580,300 585,304 592,305 597,310 604,312 612,317 622,321 630,323 645,325 657,326 662,325 680,327 700,328 712,330 738,336 760,338 775,340 792,341 805,344 817,345', ORANGE, 2);
line('price', '822,355 830,355 836,358 842,360 848,363 853,367 870,367 872,366 884,365 892,363 907,362 962,362 968,364 982,365 990,366 998,368 1027,368 1028,369 1062,369 1063,368 1082,368 1083,369 1132,369 1133,370 1188,370', ORANGE, 2);

const cap = { 'stroke-linecap': 'square' };
line('price', '0,240.500 156,240.500', LIME, 3, cap);
line('price', '157.500,240.500 157.500,236.500 162.500,236.500 162.500,224.500 167.500,224.500 167.500,220.500 172.500,220.500 172.500,192.500 177.500,192.500 177.500,190.500 182.500,190.500 182.500,187.500 217.500,187.500 217.500,181.500 222.500,181.500 222.500,166.500 227.500,166.500 227.500,155.500 242.500,155.500 242.500,154.500 252.500,154.500 252.500,150.500 321,150.500', PINK, 3, cap);
line('price', '322.500,156.500 327.500,156.500 327.500,165.500 457.500,165.500 457.500,169.500 467.500,169.500 467.500,179.500 537.500,179.500 537.500,181.500 542.500,181.500 542.500,190.500 552.500,190.500 552.500,229.500 557.500,229.500 557.500,280.500 577.500,280.500 577.500,287.500 582.500,287.500 582.500,320.500 607.500,320.500 607.500,331.500 617.500,331.500 617.500,334.500 622.500,334.500 622.500,355.500 627.500,355.500 627.500,361.500 712.500,361.500 717.500,362.500 717.500,369.500 722.500,369.500 722.500,374.500 727.500,374.500 727.500,378.500 737.500,378.500 737.500,385.500 772.500,385.500 772.500,396.500 836,396.500', LIME, 3, cap);
line('price', '837.500,396.500 837.500,393.500 872.500,393.500 872.500,387.500 882.500,387.500 882.500,378.500 897.500,378.500 902.500,377.500 902.500,368.500 988,368.500', PINK, 3, cap);
line('price', '989,369.500 993.500,369.500 993.500,370.500 1002.500,370.500 1002.500,373.500 1192,373.500', LIME, 3, cap);

add('price', 'rect', { x: 321.5, y: 120.5, width: 510, height: 327, fill: 'none', stroke: '#ed1c24', 'stroke-width': 5 });
rect('price', 1131, 124, 53, 4, '#808080');
rect('price', 1131, 157, 53, 4, '#808080');
add('price', 'text', { x: 1186, y: 131, class: 'gold' }, '金箍棒1');
add('price', 'text', { x: 1186, y: 164, class: 'gold' }, '金箍棒2');

// Heights below are in thirds of a pixel.
const tone = i => (candles[i][4] === 'r' ? RED : GREEN);
const fill = (n, v) => Array(n).fill(v);

const volume = [459,472,462,470,471,474,474,474,468,474,474,468,465,453,381,348,402,384,399,429,402,447,435,408,426,456,450,462,456,432,447,423,351,423,429,441,438,438,441,447,450,456,411,393,390,438,456,450,462,456,462,465,465,465,450,465,462,474,471,465,456,465,462,447,468,471,468,471,465,471,471,474,474,474,476,476,476,476,479,479,468,477,477,477,477,477,474,477,477,474,468,444,462,474,477,477,480,480,480,480,480,480,480,474]
  .map(v => 484 - v).concat([168,339,270,240,78,210,174,177,273,261,195,288,258,330,336,249,309,336,327,339,321,333,327,375,375,366,369,243,333,387,369,369,393,378,399,375,354,387,381,309,366,372,369,357,384,387,396,387,369,387,378,393,396,378,387,381,315,348,387,357,303,372,384,393,402,396,372,390,396,408,396,402,402,375,402,408,408,411,408,411,414,411,408,411,402,411,411,402,408,414,393,405,408,405,390,405,408,411,411,408,411,408,408,413,413,413,413,413,402,411,413,417,408,408,411,413,417,408,408,411,402,408,413,408,408,411,411,408,413,413,408,417,417,417].map(v => 424 - v));
const average = [];
volume.forEach((v, i) => {
  const h = Math.round(v / 3);
  rect('volume', cx(i) - 1, 602 - h, 3, h, tone(i));
  const span = volume.slice(Math.max(0, i - 4), i + 1);
  const mean = span.reduce((a, b) => a + b, 0) / span.length;
  average.push((cx(i) + .5) + ',' + (Math.round(601 - mean / 3) + .5));
});
rect('volume', 0, 601, 1188, 1, '#a01818');
line('volume', average.join(' '), ORANGE, 1);

const force = [648,642,633,630,633,633,633,630,627,639,627,630,639,627,615,615,630,633,642,639,639,639,627,630,636,627,633,630,627,618,624,615,612,618,615,609,612,615,618,615,618,618,609,603,606,612,612,609,609,606,606,609,612,615,615,615,615,615,618,621,624,624,627,627,627,624,624,627,627,627,624,627,627,624,624,627,624,624,624,624,621,621,621,621,621,621,627,627,627,633,630,633,636,633,633,633,633,633,633,630,630,630,630,630]
  .map(v => 966 - v).concat([642,663,666,678,837,633,645,627,633,672,681,633,648,657,642,663,648,663,729,732,888,654,669,651,690,690,636,603,627,618,618,627,633,618,618,648,648,642,660,699,699,708,702,690,702,669,666,672,768,705,714,759,696,696,690,684,750,714,693,654,804,669,756,708,795,825,759,729,735,717,693,687,735,681,654,666,651,636,654,663,657,657,681,675,687,669,681,690,660,663,708,684,690,711,723,657,657,654,654,657,678,660,675,603,606,603,600,603,594,600,603,603,609,606,606,603,600,594,603,600,612,609,606,603,597,603,603,615,618,612,609,612,615,615].map(v => 906 - v));
force.forEach((v, i) => rect('force', cx(i) - 1, 762 - Math.round(v / 3), 3, Math.round(v / 3), RED));

const chips = [216,219,216,213,213,213,213,216,213,216,213,213,210,213,198,192,198,204,210,210,207,210,204,201,207,207,210,210,207,201,201,192,177,180,171,171,174,177,183,180,180,180,162,147,150,162,165,162,162,156,156,159,159,162,162,165,165,162,162,165,168,168]
  .concat(fill(7, 174), [177], fill(4, 174), fill(5, 174), [171, 168], fill(8, 165), [168], fill(8, 177), [174]);
chips.push(...fill(104 - chips.length, 171));
chips.push(195,204,213,216,249,273,282,279,285,309,336,336,321,330,327,348,339,345,354,348,366,363,360,363,369,378,369,333,345,345,354,357,363,372,372,381,396,399,411,432,435,444,450,456,453,450,453,456,468,465,474,477,474,468,468,459,453,435,432,414,
  144,141,147,150,147,153,159,150,150,147,144,141,144,138,138, ...fill(9, 141), ...fill(5, 144), 147,150,150,150,153,159,156,156,153,150,150,150, ...fill(4, 147), 144, ...fill(6, 141), 144,144,141,141,141,138,141,141, ...fill(6, 147), 144,147,147,147,144,144,144,144);
chips.forEach((v, i) => {
  const d = Math.round((v - 156) / 3);
  if (d > 0) rect('chips', cx(i) - 1, 802, 3, d, GREEN);
  if (d < 0) rect('chips', cx(i) - 1, 802 + d, 3, -d, RED);
});

// Scales
function scale(id, top, bottom, labels, minor) {
  rect(id, 1829, top, 1, bottom - top, '#ff0000');
  minor.forEach(y => rect(id, 1829, y, 2, 1, '#ff0000'));
  labels.forEach(([y, t]) => {
    rect(id, 1829, y, 5, 1, '#ff0000');
    if (t) add(id, 'text', { x: 1836, y: y + 5, class: 'lbl' }, t);
  });
}
function tag(id, y, color, text) {
  add(id, 'path', { d: `M1831 ${y + 8}L1838 ${y}H1919V${y + 15}H1838Z`, fill: color });
  add(id, 'text', { x: 1839, y: y + 13, class: 'lbl inv' }, text);
}
scale('axis-price', 49, 452, [[121, '23,100'], [161, '23,050'], [201, '23,000'], [240, '22,950'], [280, '22,900'], [320, '22,850'], [360, '22,800'], [400, '22,750'], [440, '22,700']], [101, 141, 181, 220, 260, 300, 340, 380, 420]);
add('axis-price', 'rect', { x: 1830.5, y: 69.5, width: 88, height: 17, fill: '#fff', stroke: '#000' });
add('axis-price', 'text', { x: 1836, y: 83, class: 'lbl' }, '23,154');
tag('axis-price', 382, GREEN, '22,763');
rect('axis-price', 1882, 398, 37, 14, GREEN);
add('axis-price', 'text', { x: 1884, y: 410, class: 'lbl inv' }, '02:38');
scale('axis-volume', 456, 607, [[514, '10,000.00'], [557, '5,000.00'], [601, '']], [536, 579]);
tag('axis-volume', 592, GREEN, '245.00');
scale('axis-force', 611, 762, [[641, '4,000.00'], [658, '2,000.00']], [648, 676]);
tag('axis-force', 658, RED, '1,523.00');
scale('axis-chips', 766, 915, [[801, ''], [898, '-5,000.00']], [849]);
tag('axis-chips', 791, RED, '130.00');

[[57, '21:20'], [137, '22:40'], [217, '22'], [297, '01:20'], [377, '02:40'], [457, '04:00'], [522, '24'], [542, ''], [627, '10:35'], [712, '12:00'], [807, '13:35'], [902, '16:25'], [997, '18:00'], [1087, '19:30'], [1267, '22:30'], [1357, '25'], [1447, '01:30'], [1537, '03:00'], [1627, '04:30'], [1717, '06:00']]
  .forEach(([x, t]) => {
    rect('times', x, 916, 1, 3, '#ff0000');
    if (t) add('times', 'text', { x: x + 2, y: 932, class: 'lbl' }, t);
  });
add('times', 'rect', { x: 1163.5, y: 916.5, width: 97, height: 18, fill: '#fff', stroke: '#000' });
add('times', 'text', { x: 1165, y: 931, class: 'lbl' }, '2024/6/24 21:35');
```
